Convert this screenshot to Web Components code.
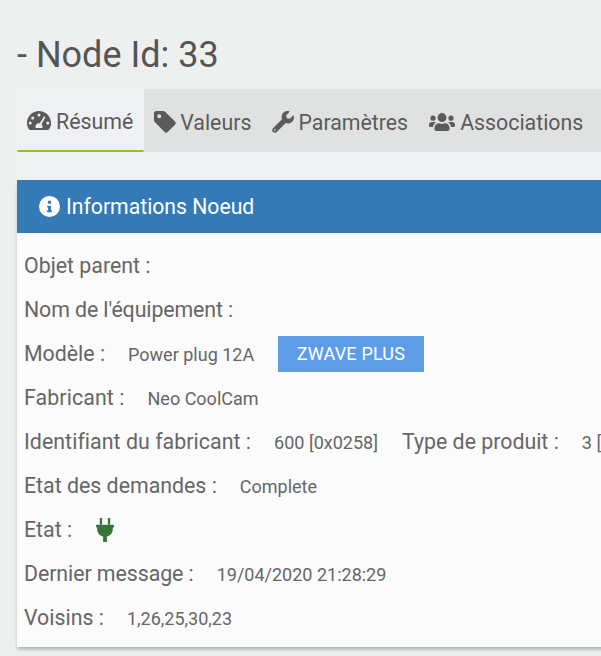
<!DOCTYPE html>
<html>
<head>
<meta charset="utf-8">
<title>Node</title>
<style>
  html, body { margin: 0; height: 100%; overflow: hidden; }
  body { background: #eef0f0; font-family: Roboto, sans-serif; color: #555; }
</style>
</head>
<body>
<node-page></node-page>

<script>
const ICONS = {
  gauge: `<svg viewBox="0 0 24 20" width="24" height="20"><path fill="currentColor" fill-rule="evenodd" d="M12 0C5.400 0 0 5.300 0 11.900c0 2.200.6 4.400 1.800 6.200.3.500.9.900 1.500.900h17.400c.6 0 1.200-.4 1.500-.9 1.200-1.800 1.800-4 1.800-6.200C24 5.300 18.600 0 12 0zM12 2.600a1.500 1.500 0 1 1 0 3 1.500 1.500 0 0 1 0-3zM5.700 5.400a1.500 1.500 0 1 1 0 3 1.500 1.500 0 0 1 0-3zM3.200 10.500a1.500 1.500 0 1 1 0 3 1.500 1.500 0 0 1 0-3zM20.800 10.500a1.500 1.500 0 1 1 0 3 1.500 1.500 0 0 1 0-3zM17.100 5.300l1.300.7-3.900 7.300c.6.600 1 1.400 1 2.300 0 .5-.1 1-.3 1.400H8.800c-.2-.4-.3-.9-.3-1.400 0-1.900 1.500-3.400 3.400-3.400.3 0 .6 0 .9.100z"/></svg>`,
  tag: `<svg viewBox="0 0 22 22" width="22" height="22"><path fill="currentColor" fill-rule="evenodd" d="M0 2.200C0 1 1 0 2.200 0h7.300c.6 0 1.200.2 1.600.7l9.900 9.900c.9.900.9 2.300 0 3.100l-7.300 7.300c-.9.900-2.300.9-3.100 0L.7 11.100C.2 10.700 0 10.100 0 9.500zM5.200 3.200a2 2 0 1 0 0 4 2 2 0 0 0 0-4z"/></svg>`,
  wrench: `<svg viewBox="0 0 22 22" width="22" height="22"><path fill="currentColor" fill-rule="evenodd" d="M21.700 4.700c-.1-.3-.5-.4-.7-.2l-3.200 3.200-3-.5-.5-3L17.500 1c.2-.2.100-.6-.2-.7-2.100-.6-4.400-.1-6 1.500-1.700 1.700-2.200 4.200-1.300 6.400L1 17.200c-1.100 1.100-1.100 2.800 0 3.800 1.100 1.100 2.800 1.100 3.800 0l8.900-8.900c2.200.9 4.700.4 6.400-1.300 1.700-1.700 2.200-4 1.600-6.100zM2.900 20a.9.900 0 1 1 0-1.800.9.900 0 0 1 0 1.800z"/></svg>`,
  users: `<svg viewBox="0 0 26 18" width="26" height="18"><path fill="currentColor" d="M4 7.800a2.600 2.600 0 1 0 0-5.200 2.600 2.600 0 0 0 0 5.200zM22 7.800a2.600 2.600 0 1 0 0-5.200 2.600 2.600 0 0 0 0 5.200zM13 9a4.400 4.400 0 1 0 0-8.900A4.400 4.400 0 0 0 13 9zM16 10.300h-.3c-.8.400-1.800.6-2.700.6s-1.900-.2-2.700-.6H10c-2.500 0-4.500 2-4.500 4.600v1.100c0 1.100.9 2 1.900 2h11.100c1.100 0 2-.9 2-2v-1.100c0-2.600-2-4.600-4.500-4.600zM7 9.600C6.500 9.100 5.900 8.900 5.200 8.900H2.600C1.200 8.900 0 10 0 11.500v1.300c0 .7.600 1.300 1.300 1.300H4c.2-2 1.400-3.600 3-4.500zM23.400 8.900h-2.600c-.7 0-1.300.2-1.800.7 1.600.9 2.800 2.500 3 4.500h2.700c.7 0 1.300-.6 1.300-1.300v-1.300c0-1.500-1.200-2.600-2.600-2.600z"/></svg>`,
  info: `<svg viewBox="0 0 22 22" width="21" height="21"><path fill="currentColor" fill-rule="evenodd" d="M11 0a11 11 0 1 0 0 22 11 11 0 0 0 0-22zM11 4.600a1.900 1.900 0 1 1 0 3.800 1.900 1.900 0 0 1 0-3.800zM13.500 16.400c0 .3-.2.500-.5.500H9c-.3 0-.5-.2-.5-.5v-1c0-.3.2-.5.500-.5h.5v-2.800H9c-.3 0-.5-.2-.5-.5v-1c0-.3.2-.5.500-.5h3c.3 0 .5.200.5.500v4.300h.5c.3 0 .5.200.5.500z"/></svg>`,
  plug: `<svg viewBox="0 0 18 24" width="18" height="24"><path fill="currentColor" d="M3.800 0h2.300v6.500H3.800zM11.900 0h2.300v6.500h-2.300zM.7 6.800h16.600c.4 0 .7.300.7.700v1.300c0 .4-.3.700-.7.700h-.5v1.700c0 3.600-2.500 6.600-5.900 7.300v5.500H7.100v-5.500c-3.400-.7-5.900-3.700-5.900-7.300V9.500H.7c-.4 0-.7-.3-.7-.7V7.500c0-.4.3-.7.700-.7z"/></svg>`
};

// onglet de la barre du haut
class NodeTab extends HTMLElement {
  connectedCallback() {
    const active = this.hasAttribute('active');
    this.attachShadow({ mode: 'open' }).innerHTML = `
      <style>
        :host { display: block; flex: none; }
        .tab {
          display: flex; align-items: center; gap: 5px;
          height: 63px; padding: 3px 10px 0; box-sizing: border-box;
          font-size: 21.33px; color: #5b5b5b;
          ${active ? 'background:#eff0f2;border-bottom:2px solid #95c11f;border-radius:0 0 2px 2px;padding-right:11px;' : ''}
        }
        :host([tight]) .tab { gap: 4px; padding-right: 11px; }
        svg { display: block; margin-top: -1px; }
      </style>
      <div class="tab">${ICONS[this.getAttribute('icon')]}<slot></slot></div>`;
  }
}
customElements.define('node-tab', NodeTab);

// ligne label : valeur
class InfoRow extends HTMLElement {
  connectedCallback() {
    const tune = this.getAttribute('tune') || 0;
    this.attachShadow({ mode: 'open' }).innerHTML = `
      <style>
        :host { display: flex; align-items: center; height: 44px; white-space: nowrap; flex: none; }
        .label { font-size: 21.33px; color: #666; padding-bottom: 2px; letter-spacing: ${tune}px; }
        ::slotted(*) { font-size: 18px; color: #666; }
      </style>
      <span class="label">${this.getAttribute('label')}</span><slot></slot>`;
  }
}
customElements.define('info-row', InfoRow);

class NodePanel extends HTMLElement {
  connectedCallback() {
    this.attachShadow({ mode: 'open' }).innerHTML = `
      <style>
        :host { display: block; box-shadow: 0 3px 4px -1px rgba(0,0,0,.3); }
        header {
          display: flex; align-items: center; gap: 6px;
          height: 53px; padding-left: 22px;
          background: #337ab7; color: #fff; font-size: 21.2px;
        }
        header svg { display: block; }
        .body { background: #fbfbfb; padding: 11px 7px 7px; display: flex; flex-direction: column; }
      </style>
      <header>${ICONS.info}<span>${this.getAttribute('heading')}</span></header>
      <div class="body"><slot></slot></div>`;
  }
}
customElements.define('node-panel', NodePanel);

class NodePage extends HTMLElement {
  connectedCallback() {
    this.attachShadow({ mode: 'open' }).innerHTML = `
      <style>
        :host { display: block; width: 640px; padding-left: 17px; }
        h1 { margin: 0; padding-top: 35px; height: 54px; font-size: 36px; font-weight: 400; line-height: 41px; color: #555; }
        .tabs { display: flex; background: #e0e2e1; height: 63px; }
        .content { background: #eff0f2; padding-top: 28px; }
        .v { margin-left: 23px; }
        .btn {
          display: inline-block; margin-left: 24px; padding: 0 18.5px; line-height: 36px;
          background: #5e9de6; color: #fff; letter-spacing: .2px;
        }
        .plug { margin-left: 24px; color: #38753a; display: flex; }
        .sub { font-size: 21.33px; margin-left: 24px; padding-bottom: 2px; }
      </style>
      <h1>- Node Id: 33</h1>
      <div class="tabs">
        <node-tab icon="gauge" active>Résumé</node-tab>
        <node-tab icon="tag" tight>Valeurs</node-tab>
        <node-tab icon="wrench" tight>Paramètres</node-tab>
        <node-tab icon="users">Associations</node-tab>
      </div>
      <div class="content">
        <node-panel heading="Informations Noeud">
          <info-row label="Objet parent :"></info-row>
          <info-row label="Nom de l'équipement :" tune="-.1"></info-row>
          <info-row label="Modèle :"><span class="v">Power plug 12A</span><span class="btn">ZWAVE PLUS</span></info-row>
          <info-row label="Fabricant :" tune=".1"><span class="v">Neo CoolCam</span></info-row>
          <info-row label="Identifiant du fabricant :" tune=".05"><span class="v">600 [0x0258]</span><span class="v sub">Type de produit :</span><span class="v">3 [0x0003]</span></info-row>
          <info-row label="Etat des demandes :"><span class="v">Complete</span></info-row>
          <info-row label="Etat :"><span class="plug">${ICONS.plug}</span></info-row>
          <info-row label="Dernier message :" tune="-.06"><span class="v">19/04/2020 21:28:29</span></info-row>
          <info-row label="Voisins :"><span class="v">1,26,25,30,23</span></info-row>
        </node-panel>
      </div>`;
  }
}
customElements.define('node-page', NodePage);
</script>
</body>
</html>
